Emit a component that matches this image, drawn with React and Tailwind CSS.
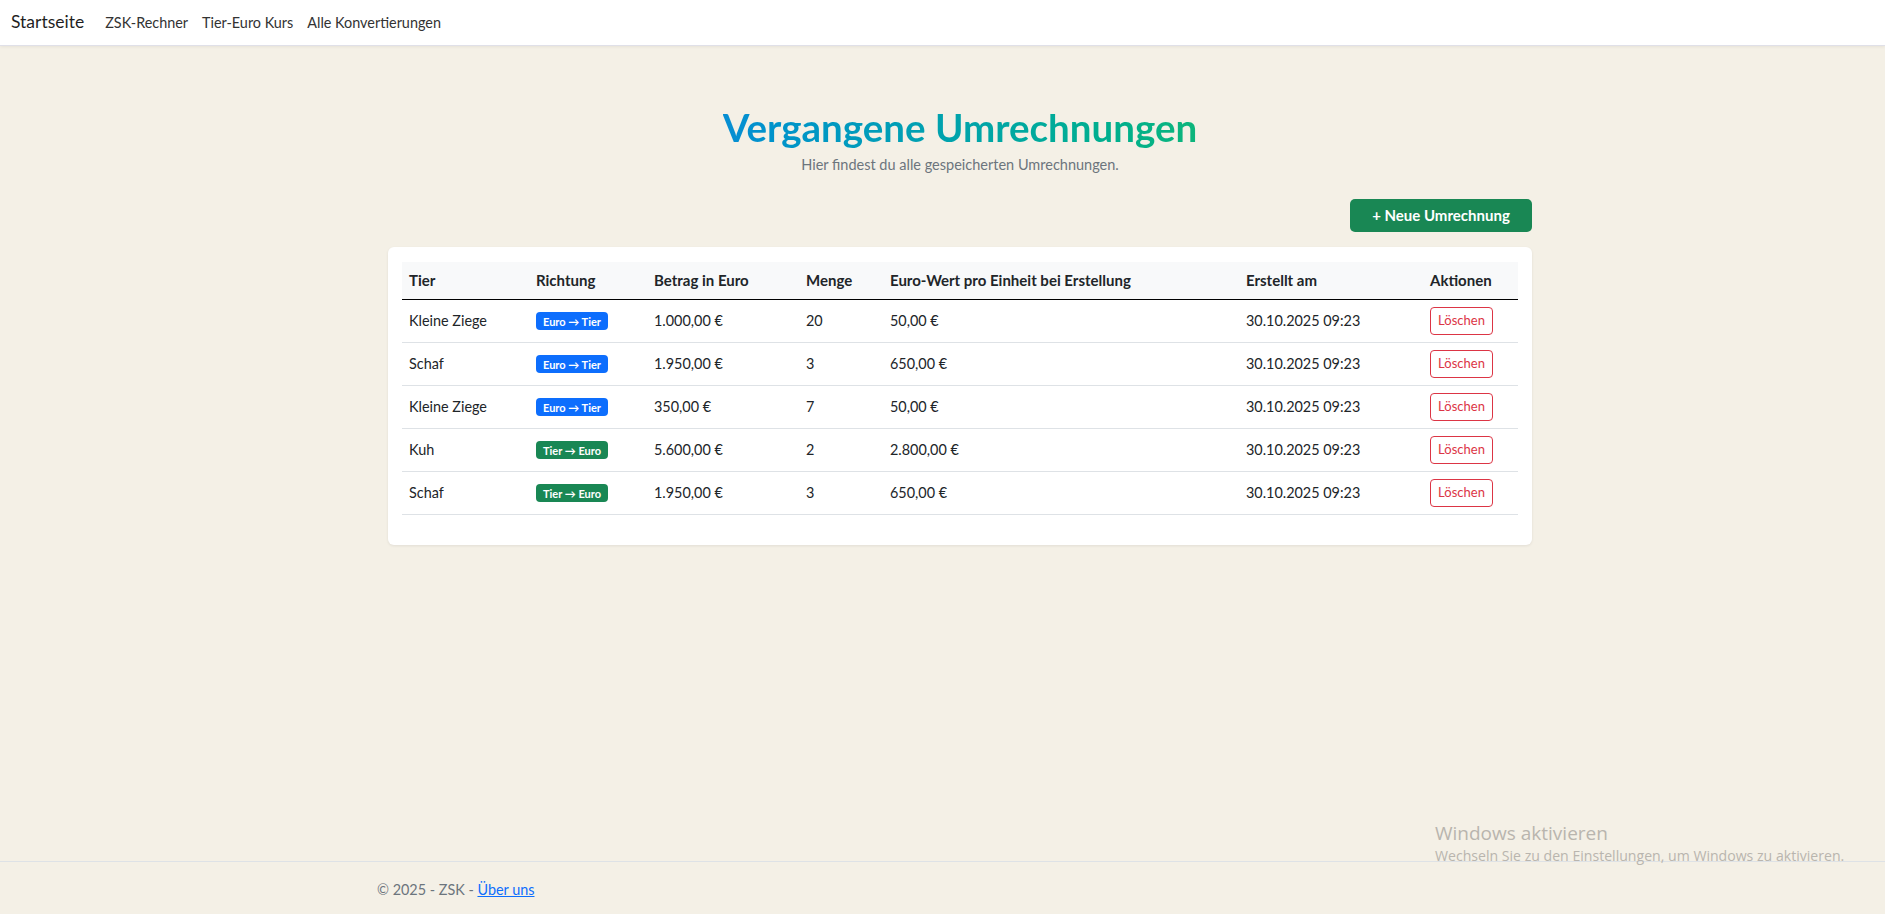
import React from 'react';

const rows = [
    { tier: 'Kleine Ziege', dir: 'e2t', betrag: '1.000,00 €', menge: '20', wert: '50,00 €', datum: '30.10.2025 09:23' },
    { tier: 'Schaf', dir: 'e2t', betrag: '1.950,00 €', menge: '3', wert: '650,00 €', datum: '30.10.2025 09:23' },
    { tier: 'Kleine Ziege', dir: 'e2t', betrag: '350,00 €', menge: '7', wert: '50,00 €', datum: '30.10.2025 09:23' },
    { tier: 'Kuh', dir: 't2e', betrag: '5.600,00 €', menge: '2', wert: '2.800,00 €', datum: '30.10.2025 09:23' },
    { tier: 'Schaf', dir: 't2e', betrag: '1.950,00 €', menge: '3', wert: '650,00 €', datum: '30.10.2025 09:23' },
];

const font = { fontFamily: '"Lato", "Noto Sans", sans-serif' };

const Badge = ({ dir }) =>
    dir === 'e2t' ? (
        <span className="inline-flex items-center h-[18px] px-[7px] rounded-[4px] bg-[#0d6efd] text-white text-[11px] font-bold leading-none">
            Euro → Tier
        </span>
    ) : (
        <span className="inline-flex items-center h-[18px] px-[7px] rounded-[4px] bg-[#198754] text-white text-[11px] font-bold leading-none">
            Tier → Euro
        </span>
    );

export default function App() {
    return (
        <div className="relative min-h-screen flex flex-col bg-[#f4f0e6] text-[#212529] text-[14.4px]" style={font}>
            {/* Navbar */}
            <header className="h-[46px] flex items-center bg-white border-b border-[#e0e0e8] shadow-[0_1px_3px_rgba(0,0,0,0.06)]">
                <span className="ml-[11px] text-[17.5px] text-[#1f1f1f]">Startseite</span>
                <nav className="flex items-center ml-[21px] gap-[14px] text-[#333]">
                    <a>ZSK-Rechner</a>
                    <a>Tier-Euro Kurs</a>
                    <a>Alle Konvertierungen</a>
                </nav>
            </header>

            {/* Main */}
            <main className="flex-1 pl-[377px]">
                <div className="w-[1166px] px-[11px]">
                    <div className="text-center pt-[59px]">
                        <h1 className="inline-block text-[38.5px] leading-[45px] font-bold bg-gradient-to-r from-[#078ed3] to-[#0db57b] bg-clip-text text-transparent">
                            Vergangene Umrechnungen
                        </h1>
                        <p className="mt-[4px] leading-[22px] text-[14.5px] text-[#6c757d]">Hier findest du alle gespeicherten Umrechnungen.</p>
                    </div>

                    <div className="flex justify-end mt-[23px]">
                        <button className="w-[182px] h-[33px] flex items-center justify-center rounded-[5px] bg-[#198754] text-white text-[15px] font-bold">
                            + Neue Umrechnung
                        </button>
                    </div>

                    <div className="mt-[15px] bg-white rounded-[6px] shadow-[0_1px_3px_rgba(0,0,0,0.08)] pt-[15px] px-[14px] pb-[14px]">
                        <table className="w-full mb-[16px] border-collapse text-left">
                            <thead>
                                <tr className="bg-[#f8f9fa] border-b border-black text-[15px]">
                                    <th className="w-[127px] px-[7px] py-[7px] font-bold leading-[22px]">Tier</th>
                                    <th className="w-[118px] px-[7px] py-[7px] font-bold">Richtung</th>
                                    <th className="w-[152px] px-[7px] py-[7px] font-bold">Betrag in Euro</th>
                                    <th className="w-[84px] px-[7px] py-[7px] font-bold">Menge</th>
                                    <th className="w-[356px] px-[7px] py-[7px] font-bold">Euro-Wert pro Einheit bei Erstellung</th>
                                    <th className="w-[184px] px-[7px] py-[7px] font-bold">Erstellt am</th>
                                    <th className="px-[7px] py-[7px] font-bold">Aktionen</th>
                                </tr>
                            </thead>
                            <tbody>
                                {rows.map((r, i) => (
                                    <tr key={i} className="border-b border-[#dee2e6]">
                                        <td className="px-[7px] py-[7px]">{r.tier}</td>
                                        <td className="px-[7px] py-[7px]"><Badge dir={r.dir} /></td>
                                        <td className="px-[7px] py-[7px]">{r.betrag}</td>
                                        <td className="px-[7px] py-[7px]">{r.menge}</td>
                                        <td className="px-[7px] py-[7px]">{r.wert}</td>
                                        <td className="px-[7px] py-[7px]">{r.datum}</td>
                                        <td className="px-[7px] py-[7px]">
                                            <button className="h-[28px] w-[63px] flex items-center justify-center rounded-[4px] border border-[#dc3545] text-[#dc3545] text-[13px]">
                                                Löschen
                                            </button>
                                        </td>
                                    </tr>
                                ))}
                            </tbody>
                        </table>
                    </div>
                </div>
            </main>

            {/* Footer */}
            <footer className="h-[53px] border-t border-[#dee2e6] pl-[377px] pt-[17px] leading-[22px] text-[#6c757d]">
                © 2025 - ZSK - <a className="text-[#0d6efd] underline">Über uns</a>
            </footer>

            {/* Windows watermark */}
            <div className="absolute left-[1435px] top-[819px] text-[#b9b5ae] pointer-events-none" style={{ fontFamily: '"Open Sans", sans-serif' }}>
                <div className="text-[19px] leading-[28px]">Windows aktivieren</div>
                <div className="text-[14.1px] leading-[18px]">Wechseln Sie zu den Einstellungen, um Windows zu aktivieren.</div>
            </div>
        </div>
    );
}
